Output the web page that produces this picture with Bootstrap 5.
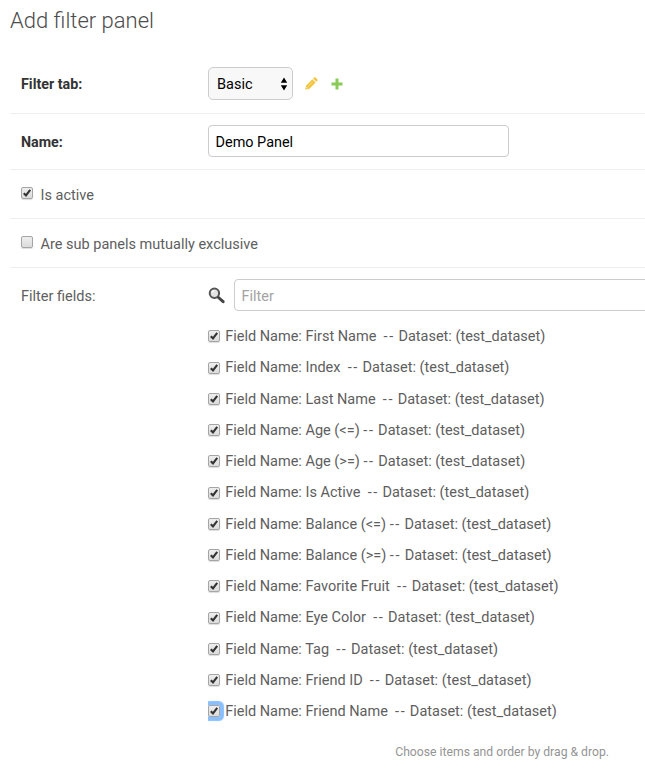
<!DOCTYPE html>
<html lang="en">
<head>
<meta charset="utf-8">
<meta name="viewport" content="width=device-width, initial-scale=1">
<title>Add filter panel</title>
<link href="https://cdn.jsdelivr.net/npm/bootstrap@5.3.0/dist/css/bootstrap.min.css" rel="stylesheet">
<style>
body { font-family: Roboto, "Liberation Sans", sans-serif; font-size: 14.5px; line-height: 20px; color: #5e5e5e; background: #fff; }
.page { padding-left: 10px; height: 770px; }
.page-title { font-size: 22px; line-height: 26px; font-weight: 300; color: #4c4c4c; padding-top: 8px; margin: 0; height: 56px; }
.form-row { border-bottom: 1px solid #eee; padding-left: 11px; }
.row-tab { height: 58px; padding-top: 11px; }
.row-name { height: 56px; padding-top: 11px; }
.row-check { height: 49px; padding-top: 16px; }
.field-label { flex: none; width: 187px; line-height: 36px; }
.required { font-weight: 700; color: #333; font-size: 14.3px; line-height: 34px; }
.field-input { height: 32px; border: 1px solid #ccc; border-radius: 4px; padding: 3px 6.500px 0; color: #000; font-size: 14.45px; }
.field-input::placeholder { color: #a3a3a3; opacity: 1; }
.name-input { width: 301px; }
.filter-input { flex: 0 0 430px; margin-left: 9px; }
.tab-select { width: 85px; height: 33px; border: 1px solid #ccc; border-radius: 5px; background: #f8f8f8; color: #000; padding: 0 4px 0 8px; margin-right: 12px; }
.tab-select span { padding-top: 2px; }
.plus-icon { margin-left: 12px; }
.tick-box { appearance: none; flex: none; width: 12px; height: 12px; margin: 0; border: 1px solid #a5a5a5; border-radius: 2px; background: linear-gradient(#eee, #dcdcdc); box-shadow: 0 1px 1px #ddd; }
.tick-box:checked { background: url("data:image/svg+xml,%3Csvg xmlns='http://www.w3.org/2000/svg' viewBox='0 0 10 10'%3E%3Cpath d='M1.8 5.2 4 7.5 8.2 1.9' fill='none' stroke='%23333' stroke-width='2.1'/%3E%3C/svg%3E") center/10px 10px no-repeat, linear-gradient(#eee, #dcdcdc); }
.row-check .tick-box { margin: 1px 7.5px 0 0; }
.fields-row { padding: 11px 0 0 11px; }
.field-list { padding-top: 9px; }
.field-list li { height: 31.25px; padding-top: 7.1px; white-space: pre; }
.field-list .tick-box { margin: 3.2px 5.2px 0 0; }
.field-list i { font-style: normal; letter-spacing: 1.6px; }
.field-list .focus-box { clip-path: inset(-5px -5px -5px 0); box-shadow: 0 0 1px 3.5px #8abfff; }
.help { font-size: 12.2px; color: #949494; width: 599px; margin-top: 15.5px; }
</style>
<script src="https://cdn.jsdelivr.net/npm/bootstrap@5.3.0/dist/js/bootstrap.bundle.min.js"></script>
</head>
<body>
<main class="page overflow-hidden">
  <h1 class="page-title">Add filter panel</h1>
  <form>
    <div class="form-row row-tab d-flex align-items-start">
      <label class="field-label required">Filter tab:</label>
      <div class="d-flex align-items-center">
        <div class="tab-select d-flex align-items-center justify-content-between" role="combobox" tabindex="0">
          <span>Basic</span>
          <svg width="8" height="14" viewBox="0 0 8 14"><path d="M4 .5 7.200 5.800H.800ZM4 13.500 .800 8.200H7.200Z" fill="#000"/></svg>
        </div>
        <svg width="13" height="13" viewBox="0 0 13 13"><path d="M.3 12.500 1 8.700 7.300 2.300l3.300 3.300L4.200 12ZM8.100 1.600 9.200.600q.7-.6 1.400 0l1.700 1.700q.7.7 0 1.400l-1.100 1.100Z" fill="#f2c43d"/><path d="M3.200 9.300 7.500 5" stroke="#fff" stroke-opacity=".7" stroke-width=".6"/><path d="m1.600 10.300 1.100 1.100" stroke="#fff" stroke-width="1"/></svg>
        <svg class="plus-icon" width="14" height="12" viewBox="0 0 14 12"><path d="M5.500.5h3v4h4v3h-4v4h-3v-4h-4v-3h4Z" fill="#88cb56"/></svg>
      </div>
    </div>
    <div class="form-row row-name d-flex align-items-start">
      <label class="field-label required" for="name">Name:</label>
      <input class="field-input name-input" id="name" type="text" value="Demo Panel">
    </div>
    <div class="form-row row-check d-flex align-items-start">
      <input class="tick-box" id="active" type="checkbox" checked><label for="active">Is active</label>
    </div>
    <div class="form-row row-check d-flex align-items-start">
      <input class="tick-box" id="exclusive" type="checkbox"><label for="exclusive">Are sub panels mutually exclusive</label>
    </div>
    <div class="d-flex align-items-start fields-row">
      <span class="field-label">Filter fields:</span>
      <div>
        <div class="d-flex align-items-center">
          <svg class="flex-shrink-0" width="17" height="17" viewBox="0 0 17 17"><circle cx="6.4" cy="6.2" r="4.7" fill="#e4e4e4" stroke="#555" stroke-width="2"/><path d="M4 5.5Q4.700 3.700 6.500 3.600" stroke="#fff" stroke-width="1.300" fill="none"/><path d="m10.500 10.500 4.600 4.200" stroke="#444" stroke-width="3" stroke-linecap="round"/></svg>
          <input class="field-input filter-input" type="text" placeholder="Filter">
        </div>
        <ul class="list-unstyled m-0 field-list">
          <li class="d-flex"><input class="tick-box" type="checkbox" checked><label>Field Name: First Name  <i>--</i> Dataset: (test_dataset)</label></li>
          <li class="d-flex"><input class="tick-box" type="checkbox" checked><label>Field Name: Index  <i>--</i> Dataset: (test_dataset)</label></li>
          <li class="d-flex"><input class="tick-box" type="checkbox" checked><label>Field Name: Last Name  <i>--</i> Dataset: (test_dataset)</label></li>
          <li class="d-flex"><input class="tick-box" type="checkbox" checked><label>Field Name: Age (&lt;=) <i>--</i> Dataset: (test_dataset)</label></li>
          <li class="d-flex"><input class="tick-box" type="checkbox" checked><label>Field Name: Age (&gt;=) <i>--</i> Dataset: (test_dataset)</label></li>
          <li class="d-flex"><input class="tick-box" type="checkbox" checked><label>Field Name: Is Active  <i>--</i> Dataset: (test_dataset)</label></li>
          <li class="d-flex"><input class="tick-box" type="checkbox" checked><label>Field Name: Balance (&lt;=) <i>--</i> Dataset: (test_dataset)</label></li>
          <li class="d-flex"><input class="tick-box" type="checkbox" checked><label>Field Name: Balance (&gt;=) <i>--</i> Dataset: (test_dataset)</label></li>
          <li class="d-flex"><input class="tick-box" type="checkbox" checked><label>Field Name: Favorite Fruit  <i>--</i> Dataset: (test_dataset)</label></li>
          <li class="d-flex"><input class="tick-box" type="checkbox" checked><label>Field Name: Eye Color  <i>--</i> Dataset: (test_dataset)</label></li>
          <li class="d-flex"><input class="tick-box" type="checkbox" checked><label>Field Name: Tag  <i>--</i> Dataset: (test_dataset)</label></li>
          <li class="d-flex"><input class="tick-box" type="checkbox" checked><label>Field Name: Friend ID  <i>--</i> Dataset: (test_dataset)</label></li>
          <li class="d-flex"><input class="tick-box focus-box" type="checkbox" checked><label>Field Name: Friend Name  <i>--</i> Dataset: (test_dataset)</label></li>
        </ul>
      </div>
    </div>
    <p class="help text-end mb-0">Choose items and order by drag &amp; drop.</p>
  </form>
</main>
</body>
</html>
